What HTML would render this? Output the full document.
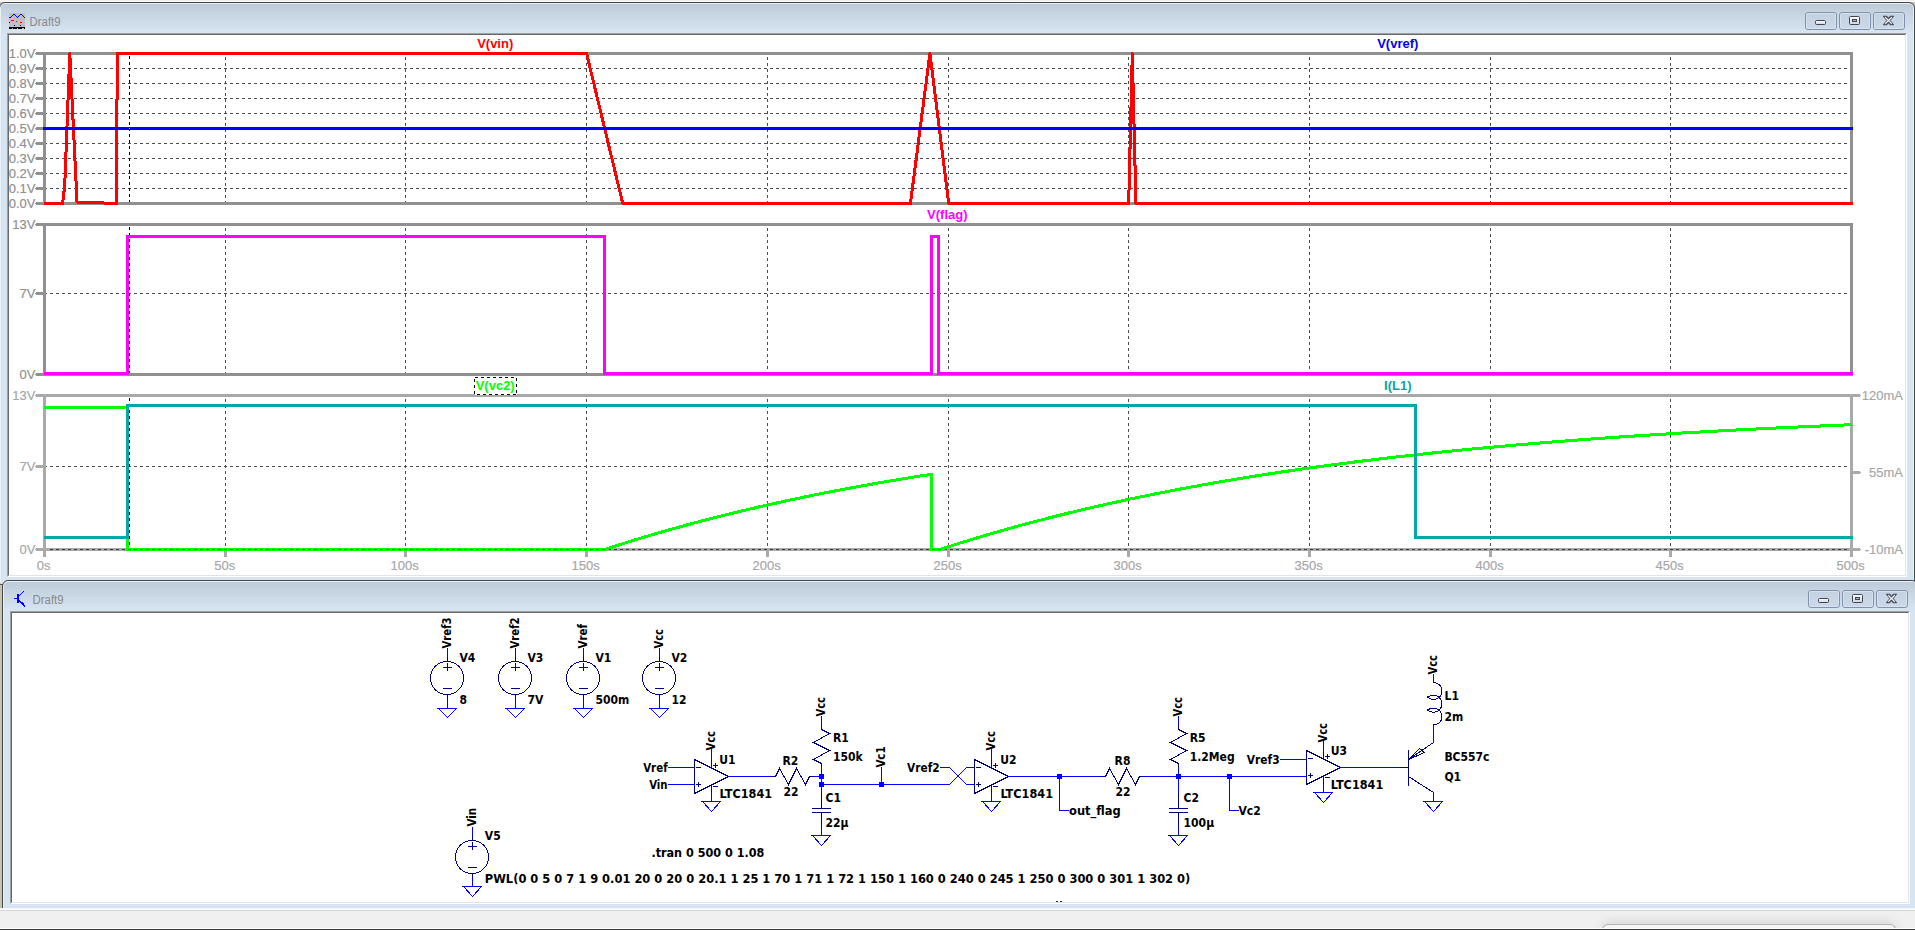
<!DOCTYPE html>
<html lang="en"><head><meta charset="utf-8"><title>LTspice - Draft9</title>
<style>
html,body{margin:0;padding:0}
body{width:1915px;height:930px;overflow:hidden;background:#f0f0f0;position:relative;font-family:"Liberation Sans",sans-serif}
#t1{position:absolute;left:0;top:1px;width:1915px;height:1px;background:#fafafa}
#mdi{position:absolute;left:0;top:2px;width:1915px;height:906px;background:#c7c3b1;overflow:hidden}
.win{position:absolute;box-sizing:border-box;border:1px solid #474747;border-radius:6px 6px 2px 2px;background:#d7e4f2 linear-gradient(#bccbdb 0,#bfcddb 2px,#d7e4f2 30px) no-repeat;background-size:100% 31px;box-shadow:inset 0 0 0 1px #e9f0fa}
.cl{position:absolute;left:7px;top:30px;width:1900px;box-sizing:border-box;border:1px solid;border-color:#a0a0a0 #fff #fff #a0a0a0;background:#fff}
.cl i{display:block;box-sizing:border-box;width:100%;height:100%;border:1px solid;border-color:#696969 #e3e3e3 #e3e3e3 #696969}
#sb{position:absolute;left:0;top:908px;width:1915px;height:22px;overflow:hidden;background:#f0f0f0;box-sizing:border-box;border-top:1px solid #f6f6f6;border-bottom:1px solid #3c3c3c}
#sb:before{content:"";position:absolute;left:0;top:0;width:100%;height:1px;background:#fff}
#sb:after{content:"";position:absolute;left:0;top:1px;width:100%;height:1px;background:#d5d5d5}
#sb b{position:absolute;left:0;bottom:0;width:100%;height:1px;background:#fff;z-index:2}
#tab{position:absolute;left:1602px;top:15px;width:294px;height:6px;border-bottom:0;box-sizing:border-box;border:1px solid #b4b4b4;border-radius:8px 8px 0 0;background:#f5f5f5;box-shadow:0 0 12px rgba(0,0,0,.2)}
svg{position:absolute;left:0;top:0}
.ts{font-family:"DejaVu Sans Condensed","DejaVu Sans","Liberation Sans",sans-serif}
.ta,.tt{font-family:"Liberation Sans",sans-serif}
</style></head><body>
<div id="t1"></div>
<div id="mdi">
 <div class="win" style="left:-1px;top:0;width:1916px;height:583px"><div class="cl" style="height:544px"><i></i></div></div>
 <div class="win" style="left:2px;top:578px;width:1916px;height:340px"><div class="cl" style="height:293px"><i></i></div></div>
</div>
<div id="sb"><div id="tab"></div><b></b></div>
<svg width="1915" height="930" viewBox="0 0 1915 930">
<g shape-rendering="crispEdges">
<line x1="44" y1="68.5" x2="1849" y2="68.5" stroke="#4d4d4d" stroke-width="1" stroke-dasharray="3 3"/>
<line x1="44" y1="83.5" x2="1849" y2="83.5" stroke="#4d4d4d" stroke-width="1" stroke-dasharray="3 3"/>
<line x1="44" y1="98.5" x2="1849" y2="98.5" stroke="#4d4d4d" stroke-width="1" stroke-dasharray="3 3"/>
<line x1="44" y1="113.5" x2="1849" y2="113.5" stroke="#4d4d4d" stroke-width="1" stroke-dasharray="3 3"/>
<line x1="44" y1="128.5" x2="1849" y2="128.5" stroke="#4d4d4d" stroke-width="1" stroke-dasharray="3 3"/>
<line x1="44" y1="143.5" x2="1849" y2="143.5" stroke="#4d4d4d" stroke-width="1" stroke-dasharray="3 3"/>
<line x1="44" y1="158.5" x2="1849" y2="158.5" stroke="#4d4d4d" stroke-width="1" stroke-dasharray="3 3"/>
<line x1="44" y1="173.5" x2="1849" y2="173.5" stroke="#4d4d4d" stroke-width="1" stroke-dasharray="3 3"/>
<line x1="44" y1="188.5" x2="1849" y2="188.5" stroke="#4d4d4d" stroke-width="1" stroke-dasharray="3 3"/>
<line x1="225.5" y1="57" x2="225.5" y2="202" stroke="#4d4d4d" stroke-width="1" stroke-dasharray="3 3"/>
<line x1="405.5" y1="57" x2="405.5" y2="202" stroke="#4d4d4d" stroke-width="1" stroke-dasharray="3 3"/>
<line x1="586.5" y1="57" x2="586.5" y2="202" stroke="#4d4d4d" stroke-width="1" stroke-dasharray="3 3"/>
<line x1="767.5" y1="57" x2="767.5" y2="202" stroke="#4d4d4d" stroke-width="1" stroke-dasharray="3 3"/>
<line x1="948.5" y1="57" x2="948.5" y2="202" stroke="#4d4d4d" stroke-width="1" stroke-dasharray="3 3"/>
<line x1="1128.5" y1="57" x2="1128.5" y2="202" stroke="#4d4d4d" stroke-width="1" stroke-dasharray="3 3"/>
<line x1="1309.5" y1="57" x2="1309.5" y2="202" stroke="#4d4d4d" stroke-width="1" stroke-dasharray="3 3"/>
<line x1="1490.5" y1="57" x2="1490.5" y2="202" stroke="#4d4d4d" stroke-width="1" stroke-dasharray="3 3"/>
<line x1="1670.5" y1="57" x2="1670.5" y2="202" stroke="#4d4d4d" stroke-width="1" stroke-dasharray="3 3"/>
<line x1="129.5" y1="56" x2="129.5" y2="202" stroke="#000" stroke-width="1" stroke-dasharray="3 3"/>
<line x1="44.5" y1="52" x2="44.5" y2="205" stroke="#909090" stroke-width="3"/>
<line x1="1851.5" y1="52" x2="1851.5" y2="205" stroke="#909090" stroke-width="3"/>
<line x1="36" y1="53.5" x2="1853" y2="53.5" stroke="#909090" stroke-width="3"/>
<line x1="36" y1="203.5" x2="1853" y2="203.5" stroke="#909090" stroke-width="3"/>
<line x1="36" y1="53.5" x2="44.5" y2="53.5" stroke="#909090" stroke-width="3"/>
<line x1="35" y1="53.5" x2="37" y2="53.5" stroke="#909090" stroke-width="1"/>
<line x1="36" y1="68.5" x2="44.5" y2="68.5" stroke="#909090" stroke-width="3"/>
<line x1="35" y1="68.5" x2="37" y2="68.5" stroke="#909090" stroke-width="1"/>
<line x1="36" y1="83.5" x2="44.5" y2="83.5" stroke="#909090" stroke-width="3"/>
<line x1="35" y1="83.5" x2="37" y2="83.5" stroke="#909090" stroke-width="1"/>
<line x1="36" y1="98.5" x2="44.5" y2="98.5" stroke="#909090" stroke-width="3"/>
<line x1="35" y1="98.5" x2="37" y2="98.5" stroke="#909090" stroke-width="1"/>
<line x1="36" y1="113.5" x2="44.5" y2="113.5" stroke="#909090" stroke-width="3"/>
<line x1="35" y1="113.5" x2="37" y2="113.5" stroke="#909090" stroke-width="1"/>
<line x1="36" y1="128.5" x2="44.5" y2="128.5" stroke="#909090" stroke-width="3"/>
<line x1="35" y1="128.5" x2="37" y2="128.5" stroke="#909090" stroke-width="1"/>
<line x1="36" y1="143.5" x2="44.5" y2="143.5" stroke="#909090" stroke-width="3"/>
<line x1="35" y1="143.5" x2="37" y2="143.5" stroke="#909090" stroke-width="1"/>
<line x1="36" y1="158.5" x2="44.5" y2="158.5" stroke="#909090" stroke-width="3"/>
<line x1="35" y1="158.5" x2="37" y2="158.5" stroke="#909090" stroke-width="1"/>
<line x1="36" y1="173.5" x2="44.5" y2="173.5" stroke="#909090" stroke-width="3"/>
<line x1="35" y1="173.5" x2="37" y2="173.5" stroke="#909090" stroke-width="1"/>
<line x1="36" y1="188.5" x2="44.5" y2="188.5" stroke="#909090" stroke-width="3"/>
<line x1="35" y1="188.5" x2="37" y2="188.5" stroke="#909090" stroke-width="1"/>
<line x1="36" y1="203.5" x2="44.5" y2="203.5" stroke="#909090" stroke-width="3"/>
<line x1="35" y1="203.5" x2="37" y2="203.5" stroke="#909090" stroke-width="1"/>
<line x1="44" y1="293.5" x2="1849" y2="293.5" stroke="#4d4d4d" stroke-width="1" stroke-dasharray="3 3"/>
<line x1="225.5" y1="228" x2="225.5" y2="373" stroke="#4d4d4d" stroke-width="1" stroke-dasharray="3 3"/>
<line x1="405.5" y1="228" x2="405.5" y2="373" stroke="#4d4d4d" stroke-width="1" stroke-dasharray="3 3"/>
<line x1="586.5" y1="228" x2="586.5" y2="373" stroke="#4d4d4d" stroke-width="1" stroke-dasharray="3 3"/>
<line x1="767.5" y1="228" x2="767.5" y2="373" stroke="#4d4d4d" stroke-width="1" stroke-dasharray="3 3"/>
<line x1="948.5" y1="228" x2="948.5" y2="373" stroke="#4d4d4d" stroke-width="1" stroke-dasharray="3 3"/>
<line x1="1128.5" y1="228" x2="1128.5" y2="373" stroke="#4d4d4d" stroke-width="1" stroke-dasharray="3 3"/>
<line x1="1309.5" y1="228" x2="1309.5" y2="373" stroke="#4d4d4d" stroke-width="1" stroke-dasharray="3 3"/>
<line x1="1490.5" y1="228" x2="1490.5" y2="373" stroke="#4d4d4d" stroke-width="1" stroke-dasharray="3 3"/>
<line x1="1670.5" y1="228" x2="1670.5" y2="373" stroke="#4d4d4d" stroke-width="1" stroke-dasharray="3 3"/>
<line x1="129.5" y1="227" x2="129.5" y2="373" stroke="#000" stroke-width="1" stroke-dasharray="3 3"/>
<line x1="44.5" y1="223" x2="44.5" y2="376" stroke="#909090" stroke-width="3"/>
<line x1="1851.5" y1="223" x2="1851.5" y2="376" stroke="#909090" stroke-width="3"/>
<line x1="36" y1="224.5" x2="1853" y2="224.5" stroke="#909090" stroke-width="3"/>
<line x1="36" y1="374.5" x2="1853" y2="374.5" stroke="#909090" stroke-width="3"/>
<line x1="36" y1="224.5" x2="44.5" y2="224.5" stroke="#909090" stroke-width="3"/>
<line x1="35" y1="224.5" x2="37" y2="224.5" stroke="#909090" stroke-width="1"/>
<line x1="36" y1="293.5" x2="44.5" y2="293.5" stroke="#909090" stroke-width="3"/>
<line x1="35" y1="293.5" x2="37" y2="293.5" stroke="#909090" stroke-width="1"/>
<line x1="36" y1="374.5" x2="44.5" y2="374.5" stroke="#909090" stroke-width="3"/>
<line x1="35" y1="374.5" x2="37" y2="374.5" stroke="#909090" stroke-width="1"/>
<line x1="44" y1="466.5" x2="1849" y2="466.5" stroke="#4d4d4d" stroke-width="1" stroke-dasharray="3 3"/>
<line x1="225.5" y1="399" x2="225.5" y2="548" stroke="#4d4d4d" stroke-width="1" stroke-dasharray="3 3"/>
<line x1="405.5" y1="399" x2="405.5" y2="548" stroke="#4d4d4d" stroke-width="1" stroke-dasharray="3 3"/>
<line x1="586.5" y1="399" x2="586.5" y2="548" stroke="#4d4d4d" stroke-width="1" stroke-dasharray="3 3"/>
<line x1="767.5" y1="399" x2="767.5" y2="548" stroke="#4d4d4d" stroke-width="1" stroke-dasharray="3 3"/>
<line x1="948.5" y1="399" x2="948.5" y2="548" stroke="#4d4d4d" stroke-width="1" stroke-dasharray="3 3"/>
<line x1="1128.5" y1="399" x2="1128.5" y2="548" stroke="#4d4d4d" stroke-width="1" stroke-dasharray="3 3"/>
<line x1="1309.5" y1="399" x2="1309.5" y2="548" stroke="#4d4d4d" stroke-width="1" stroke-dasharray="3 3"/>
<line x1="1490.5" y1="399" x2="1490.5" y2="548" stroke="#4d4d4d" stroke-width="1" stroke-dasharray="3 3"/>
<line x1="1670.5" y1="399" x2="1670.5" y2="548" stroke="#4d4d4d" stroke-width="1" stroke-dasharray="3 3"/>
<line x1="129.5" y1="398" x2="129.5" y2="548" stroke="#000" stroke-width="1" stroke-dasharray="3 3"/>
<line x1="44.5" y1="394" x2="44.5" y2="556.5" stroke="#a9a9a9" stroke-width="3"/>
<line x1="1851.5" y1="394" x2="1851.5" y2="556.5" stroke="#a9a9a9" stroke-width="3"/>
<line x1="36" y1="395.5" x2="1860" y2="395.5" stroke="#a9a9a9" stroke-width="3"/>
<line x1="36" y1="549.5" x2="1860" y2="549.5" stroke="#a9a9a9" stroke-width="3"/>
<line x1="36" y1="395.5" x2="44.5" y2="395.5" stroke="#a9a9a9" stroke-width="3"/>
<line x1="35" y1="395.5" x2="37" y2="395.5" stroke="#a9a9a9" stroke-width="1"/>
<line x1="36" y1="466.5" x2="44.5" y2="466.5" stroke="#a9a9a9" stroke-width="3"/>
<line x1="35" y1="466.5" x2="37" y2="466.5" stroke="#a9a9a9" stroke-width="1"/>
<line x1="36" y1="549.5" x2="44.5" y2="549.5" stroke="#a9a9a9" stroke-width="3"/>
<line x1="35" y1="549.5" x2="37" y2="549.5" stroke="#a9a9a9" stroke-width="1"/>
<line x1="1851.5" y1="395.5" x2="1860" y2="395.5" stroke="#a9a9a9" stroke-width="3"/>
<line x1="1859" y1="395.5" x2="1861" y2="395.5" stroke="#a9a9a9" stroke-width="1"/>
<line x1="1851.5" y1="472.5" x2="1860" y2="472.5" stroke="#a9a9a9" stroke-width="3"/>
<line x1="1859" y1="472.5" x2="1861" y2="472.5" stroke="#a9a9a9" stroke-width="1"/>
<line x1="1851.5" y1="549.5" x2="1860" y2="549.5" stroke="#a9a9a9" stroke-width="3"/>
<line x1="1859" y1="549.5" x2="1861" y2="549.5" stroke="#a9a9a9" stroke-width="1"/>
<line x1="50" y1="549.5" x2="1849" y2="549.5" stroke="#3a3a3a" stroke-width="1" stroke-dasharray="3 3"/>
<line x1="225.5" y1="551" x2="225.5" y2="557" stroke="#a9a9a9" stroke-width="3"/>
<line x1="405.5" y1="551" x2="405.5" y2="557" stroke="#a9a9a9" stroke-width="3"/>
<line x1="586.5" y1="551" x2="586.5" y2="557" stroke="#a9a9a9" stroke-width="3"/>
<line x1="767.5" y1="551" x2="767.5" y2="557" stroke="#a9a9a9" stroke-width="3"/>
<line x1="948.5" y1="551" x2="948.5" y2="557" stroke="#a9a9a9" stroke-width="3"/>
<line x1="1128.5" y1="551" x2="1128.5" y2="557" stroke="#a9a9a9" stroke-width="3"/>
<line x1="1309.5" y1="551" x2="1309.5" y2="557" stroke="#a9a9a9" stroke-width="3"/>
<line x1="1490.5" y1="551" x2="1490.5" y2="557" stroke="#a9a9a9" stroke-width="3"/>
<line x1="1670.5" y1="551" x2="1670.5" y2="557" stroke="#a9a9a9" stroke-width="3"/>
<polyline points="43.5,203.5 44.5,203.5 62.57,203.5 64.74,185.5 69.8,53.5 77.03,202 116.78,203.5 117.14,53.5 586.6,53.5 622.74,203.5 910.41,203.5 929.93,53.5 948.72,203.5 1128.7,203.5 1132.31,53.5 1135.93,203.5 1851.5,203.5 1852.5,203.5" fill="none" stroke="#ff0000" stroke-width="3" stroke-linejoin="round"/>
<line x1="43" y1="128.5" x2="1853" y2="128.5" stroke="#0000ff" stroke-width="3"/>
<rect x="129" y="128" width="1" height="1" fill="#e8e800"/>
<polyline points="43.5,373.5 127.5,373.5 127.5,236.5 604.5,236.5 604.5,373.5 931.5,373.5 931.5,236.5 938.5,236.5 938.5,373.5 1852.5,373.5" fill="none" stroke="#ff00ff" stroke-width="3" stroke-linejoin="round"/>
<polyline points="43.5,407.5 127.5,407.5 127.5,549.5 604.5,549.5 606,549.06 610,547.76 614,546.47 618,545.2 622,543.93 626,542.68 630,541.44 634,540.2 638,538.98 642,537.78 646,536.58 650,535.39 654,534.22 658,533.05 662,531.9 666,530.75 670,529.62 674,528.5 678,527.39 682,526.28 686,525.19 690,524.11 694,523.04 698,521.98 702,520.92 706,519.88 710,518.85 714,517.82 718,516.81 722,515.8 726,514.81 730,513.82 734,512.84 738,511.88 742,510.92 746,509.97 750,509.02 754,508.09 758,507.16 762,506.25 766,505.34 770,504.44 774,503.55 778,502.67 782,501.79 786,500.92 790,500.06 794,499.21 798,498.37 802,497.53 806,496.71 810,495.89 814,495.07 818,494.27 822,493.47 826,492.68 830,491.9 834,491.12 838,490.35 842,489.59 846,488.83 850,488.08 854,487.34 858,486.61 862,485.88 866,485.16 870,484.45 874,483.74 878,483.04 882,482.34 886,481.65 890,480.97 894,480.3 898,479.63 902,478.96 906,478.3 910,477.65 914,477.01 918,476.37 922,475.73 926,475.11 930,474.48 931.5,474.25 931.5,549.5 940,549.5 942,548.85 946,547.55 950,546.26 954,544.98 958,543.72 962,542.47 966,541.23 970,540 974,538.78 978,537.57 982,536.38 986,535.19 990,534.02 994,532.86 998,531.7 1002,530.56 1006,529.43 1010,528.31 1014,527.2 1018,526.1 1022,525.01 1026,523.93 1030,522.86 1034,521.8 1038,520.75 1042,519.71 1046,518.68 1050,517.65 1054,516.64 1058,515.64 1062,514.64 1066,513.66 1070,512.68 1074,511.71 1078,510.76 1082,509.81 1086,508.87 1090,507.93 1094,507.01 1098,506.1 1102,505.19 1106,504.29 1110,503.4 1114,502.52 1118,501.65 1122,500.78 1126,499.92 1130,499.07 1134,498.23 1138,497.39 1142,496.57 1146,495.75 1150,494.94 1154,494.13 1158,493.34 1162,492.55 1166,491.76 1170,490.99 1174,490.22 1178,489.46 1182,488.71 1186,487.96 1190,487.22 1194,486.49 1198,485.76 1202,485.04 1206,484.33 1210,483.62 1214,482.92 1218,482.23 1222,481.54 1226,480.86 1230,480.18 1234,479.51 1238,478.85 1242,478.19 1246,477.54 1250,476.9 1254,476.26 1258,475.63 1262,475 1266,474.38 1270,473.76 1274,473.16 1278,472.55 1282,471.95 1286,471.36 1290,470.77 1294,470.19 1298,469.61 1302,469.04 1306,468.47 1310,467.91 1314,467.36 1318,466.81 1322,466.26 1326,465.72 1330,465.18 1334,464.65 1338,464.13 1342,463.6 1346,463.09 1350,462.58 1354,462.07 1358,461.57 1362,461.07 1366,460.58 1370,460.09 1374,459.6 1378,459.12 1382,458.65 1386,458.18 1390,457.71 1394,457.25 1398,456.79 1402,456.34 1406,455.89 1410,455.44 1414,455 1418,454.56 1422,454.13 1426,453.7 1430,453.27 1434,452.85 1438,452.43 1442,452.02 1446,451.61 1450,451.2 1454,450.8 1458,450.4 1462,450.01 1466,449.61 1470,449.23 1474,448.84 1478,448.46 1482,448.08 1486,447.71 1490,447.34 1494,446.97 1498,446.61 1502,446.25 1506,445.89 1510,445.54 1514,445.19 1518,444.84 1522,444.49 1526,444.15 1530,443.82 1534,443.48 1538,443.15 1542,442.82 1546,442.49 1550,442.17 1554,441.85 1558,441.53 1562,441.22 1566,440.91 1570,440.6 1574,440.3 1578,439.99 1582,439.69 1586,439.4 1590,439.1 1594,438.81 1598,438.52 1602,438.24 1606,437.95 1610,437.67 1614,437.39 1618,437.12 1622,436.84 1626,436.57 1630,436.3 1634,436.04 1638,435.78 1642,435.51 1646,435.26 1650,435 1654,434.75 1658,434.49 1662,434.25 1666,434 1670,433.75 1674,433.51 1678,433.27 1682,433.03 1686,432.8 1690,432.56 1694,432.33 1698,432.1 1702,431.88 1706,431.65 1710,431.43 1714,431.21 1718,430.99 1722,430.77 1726,430.55 1730,430.34 1734,430.13 1738,429.92 1742,429.71 1746,429.51 1750,429.31 1754,429.1 1758,428.9 1762,428.71 1766,428.51 1770,428.32 1774,428.12 1778,427.93 1782,427.74 1786,427.56 1790,427.37 1794,427.19 1798,427 1802,426.82 1806,426.65 1810,426.47 1814,426.29 1818,426.12 1822,425.95 1826,425.78 1830,425.61 1834,425.44 1838,425.27 1842,425.11 1846,424.94 1850,424.78 1852.5,424.72" fill="none" stroke="#00ff00" stroke-width="3" stroke-linejoin="round"/>
<line x1="128" y1="549.5" x2="606" y2="549.5" stroke="#ff00ff" stroke-width="1" stroke-dasharray="3 3"/>
<line x1="932" y1="549.5" x2="944" y2="549.5" stroke="#ff00ff" stroke-width="1" stroke-dasharray="3 3"/>
<polyline points="43.5,537.5 127.5,537.5 127.5,405.5 1415.5,405.5 1415.5,537.5 1852.5,537.5" fill="none" stroke="#00a8a8" stroke-width="3" stroke-linejoin="round"/>
<line x1="129.5" y1="398" x2="129.5" y2="548" stroke="#000" stroke-width="1" stroke-dasharray="3 3"/>
<rect x="129" y="404" width="1" height="3" fill="#f04040"/>
<rect x="474.5" y="377.5" width="42" height="17" fill="#fff" stroke="none"/>
<rect x="474.5" y="377.5" width="42" height="17" fill="none" stroke="#000" stroke-width="1" stroke-dasharray="3 3"/>
</g>
<text class="ta" x="35.5" y="58" font-size="13.7" font-weight="normal" fill="#8f8f8f" text-anchor="end" stroke="#8f8f8f" stroke-width=".18" textLength="26.74" lengthAdjust="spacingAndGlyphs">1.0V</text>
<text class="ta" x="35.5" y="73" font-size="13.7" font-weight="normal" fill="#8f8f8f" text-anchor="end" stroke="#8f8f8f" stroke-width=".18" textLength="26.74" lengthAdjust="spacingAndGlyphs">0.9V</text>
<text class="ta" x="35.5" y="88" font-size="13.7" font-weight="normal" fill="#8f8f8f" text-anchor="end" stroke="#8f8f8f" stroke-width=".18" textLength="26.74" lengthAdjust="spacingAndGlyphs">0.8V</text>
<text class="ta" x="35.5" y="103" font-size="13.7" font-weight="normal" fill="#8f8f8f" text-anchor="end" stroke="#8f8f8f" stroke-width=".18" textLength="26.74" lengthAdjust="spacingAndGlyphs">0.7V</text>
<text class="ta" x="35.5" y="118" font-size="13.7" font-weight="normal" fill="#8f8f8f" text-anchor="end" stroke="#8f8f8f" stroke-width=".18" textLength="26.74" lengthAdjust="spacingAndGlyphs">0.6V</text>
<text class="ta" x="35.5" y="133" font-size="13.7" font-weight="normal" fill="#8f8f8f" text-anchor="end" stroke="#8f8f8f" stroke-width=".18" textLength="26.74" lengthAdjust="spacingAndGlyphs">0.5V</text>
<text class="ta" x="35.5" y="148" font-size="13.7" font-weight="normal" fill="#8f8f8f" text-anchor="end" stroke="#8f8f8f" stroke-width=".18" textLength="26.74" lengthAdjust="spacingAndGlyphs">0.4V</text>
<text class="ta" x="35.5" y="163" font-size="13.7" font-weight="normal" fill="#8f8f8f" text-anchor="end" stroke="#8f8f8f" stroke-width=".18" textLength="26.74" lengthAdjust="spacingAndGlyphs">0.3V</text>
<text class="ta" x="35.5" y="178" font-size="13.7" font-weight="normal" fill="#8f8f8f" text-anchor="end" stroke="#8f8f8f" stroke-width=".18" textLength="26.74" lengthAdjust="spacingAndGlyphs">0.2V</text>
<text class="ta" x="35.5" y="193" font-size="13.7" font-weight="normal" fill="#8f8f8f" text-anchor="end" stroke="#8f8f8f" stroke-width=".18" textLength="26.74" lengthAdjust="spacingAndGlyphs">0.1V</text>
<text class="ta" x="35.5" y="208" font-size="13.7" font-weight="normal" fill="#8f8f8f" text-anchor="end" stroke="#8f8f8f" stroke-width=".18" textLength="26.74" lengthAdjust="spacingAndGlyphs">0.0V</text>
<text class="ta" x="35.5" y="229" font-size="13.7" font-weight="normal" fill="#8f8f8f" text-anchor="end" stroke="#8f8f8f" stroke-width=".18" textLength="23.13" lengthAdjust="spacingAndGlyphs">13V</text>
<text class="ta" x="35.5" y="298" font-size="13.7" font-weight="normal" fill="#8f8f8f" text-anchor="end" stroke="#8f8f8f" stroke-width=".18" textLength="15.9" lengthAdjust="spacingAndGlyphs">7V</text>
<text class="ta" x="35.5" y="379" font-size="13.7" font-weight="normal" fill="#8f8f8f" text-anchor="end" stroke="#8f8f8f" stroke-width=".18" textLength="15.9" lengthAdjust="spacingAndGlyphs">0V</text>
<text class="ta" x="35.5" y="400" font-size="13.7" font-weight="normal" fill="#a6a6a6" text-anchor="end" stroke="#a6a6a6" stroke-width=".18" textLength="23.13" lengthAdjust="spacingAndGlyphs">13V</text>
<text class="ta" x="35.5" y="471" font-size="13.7" font-weight="normal" fill="#a6a6a6" text-anchor="end" stroke="#a6a6a6" stroke-width=".18" textLength="15.9" lengthAdjust="spacingAndGlyphs">7V</text>
<text class="ta" x="35.5" y="554" font-size="13.7" font-weight="normal" fill="#a6a6a6" text-anchor="end" stroke="#a6a6a6" stroke-width=".18" textLength="15.9" lengthAdjust="spacingAndGlyphs">0V</text>
<text class="ta" x="1903" y="400" font-size="13.7" font-weight="normal" fill="#a6a6a6" text-anchor="end" stroke="#a6a6a6" stroke-width=".18" textLength="41.19" lengthAdjust="spacingAndGlyphs">120mA</text>
<text class="ta" x="1903" y="477" font-size="13.7" font-weight="normal" fill="#a6a6a6" text-anchor="end" stroke="#a6a6a6" stroke-width=".18" textLength="33.96" lengthAdjust="spacingAndGlyphs">55mA</text>
<text class="ta" x="1903" y="554" font-size="13.7" font-weight="normal" fill="#a6a6a6" text-anchor="end" stroke="#a6a6a6" stroke-width=".18" textLength="38.29" lengthAdjust="spacingAndGlyphs">-10mA</text>
<text class="ta" x="43.7" y="570" font-size="13.7" font-weight="normal" fill="#a6a6a6" text-anchor="middle" stroke="#a6a6a6" stroke-width=".18" textLength="13.73" lengthAdjust="spacingAndGlyphs">0s</text>
<text class="ta" x="224.7" y="570" font-size="13.7" font-weight="normal" fill="#a6a6a6" text-anchor="middle" stroke="#a6a6a6" stroke-width=".18" textLength="20.96" lengthAdjust="spacingAndGlyphs">50s</text>
<text class="ta" x="404.7" y="570" font-size="13.7" font-weight="normal" fill="#a6a6a6" text-anchor="middle" stroke="#a6a6a6" stroke-width=".18" textLength="28.19" lengthAdjust="spacingAndGlyphs">100s</text>
<text class="ta" x="585.7" y="570" font-size="13.7" font-weight="normal" fill="#a6a6a6" text-anchor="middle" stroke="#a6a6a6" stroke-width=".18" textLength="28.19" lengthAdjust="spacingAndGlyphs">150s</text>
<text class="ta" x="766.7" y="570" font-size="13.7" font-weight="normal" fill="#a6a6a6" text-anchor="middle" stroke="#a6a6a6" stroke-width=".18" textLength="28.19" lengthAdjust="spacingAndGlyphs">200s</text>
<text class="ta" x="947.7" y="570" font-size="13.7" font-weight="normal" fill="#a6a6a6" text-anchor="middle" stroke="#a6a6a6" stroke-width=".18" textLength="28.19" lengthAdjust="spacingAndGlyphs">250s</text>
<text class="ta" x="1127.7" y="570" font-size="13.7" font-weight="normal" fill="#a6a6a6" text-anchor="middle" stroke="#a6a6a6" stroke-width=".18" textLength="28.19" lengthAdjust="spacingAndGlyphs">300s</text>
<text class="ta" x="1308.7" y="570" font-size="13.7" font-weight="normal" fill="#a6a6a6" text-anchor="middle" stroke="#a6a6a6" stroke-width=".18" textLength="28.19" lengthAdjust="spacingAndGlyphs">350s</text>
<text class="ta" x="1489.7" y="570" font-size="13.7" font-weight="normal" fill="#a6a6a6" text-anchor="middle" stroke="#a6a6a6" stroke-width=".18" textLength="28.19" lengthAdjust="spacingAndGlyphs">400s</text>
<text class="ta" x="1669.7" y="570" font-size="13.7" font-weight="normal" fill="#a6a6a6" text-anchor="middle" stroke="#a6a6a6" stroke-width=".18" textLength="28.19" lengthAdjust="spacingAndGlyphs">450s</text>
<text class="ta" x="1850.7" y="570" font-size="13.7" font-weight="normal" fill="#a6a6a6" text-anchor="middle" stroke="#a6a6a6" stroke-width=".18" textLength="28.19" lengthAdjust="spacingAndGlyphs">500s</text>
<text class="ta" x="495.2" y="48" font-size="13.7" font-weight="bold" fill="#ff0000" text-anchor="middle" textLength="36.11" lengthAdjust="spacingAndGlyphs">V(vin)</text>
<text class="ta" x="1397.8" y="48" font-size="13.7" font-weight="bold" fill="#0000ff" text-anchor="middle" textLength="41.18" lengthAdjust="spacingAndGlyphs">V(vref)</text>
<text class="ta" x="947.3" y="219" font-size="13.7" font-weight="bold" fill="#ff00ff" text-anchor="middle" textLength="40.44" lengthAdjust="spacingAndGlyphs">V(flag)</text>
<text class="ta" x="495.2" y="390" font-size="13.7" font-weight="bold" fill="#00ff00" text-anchor="middle" textLength="39.02" lengthAdjust="spacingAndGlyphs">V(vc2)</text>
<text class="ta" x="1397.8" y="390" font-size="13.7" font-weight="bold" fill="#00a8a8" text-anchor="middle" textLength="27.44" lengthAdjust="spacingAndGlyphs">I(L1)</text>
<g shape-rendering="crispEdges" fill="none" stroke-linecap="square">
<polyline points="447.5,648.5 447.5,656.5" fill="none" stroke="#0000ff" stroke-width="1"/>
<polyline points="447.5,657.5 447.5,661.5" fill="none" stroke="#000080" stroke-width="1"/>
<polyline points="463.5,678 463.44,679.44 463.25,680.87 462.94,682.27 462.5,683.64 461.95,684.97 461.29,686.25 460.52,687.46 459.64,688.61 458.67,689.67 457.61,690.64 456.46,691.52 455.25,692.29 453.97,692.95 452.64,693.5 451.27,693.94 449.87,694.25 448.44,694.44 447,694.5 445.56,694.44 444.13,694.25 442.73,693.94 441.36,693.5 440.03,692.95 438.75,692.29 437.54,691.52 436.39,690.64 435.33,689.67 434.36,688.61 433.48,687.46 432.71,686.25 432.05,684.97 431.5,683.64 431.06,682.27 430.75,680.87 430.56,679.44 430.5,678 430.56,676.56 430.75,675.13 431.06,673.73 431.5,672.36 432.05,671.03 432.71,669.75 433.48,668.54 434.36,667.39 435.33,666.33 436.39,665.36 437.54,664.48 438.75,663.71 440.03,663.05 441.36,662.5 442.73,662.06 444.13,661.75 445.56,661.56 447,661.5 448.44,661.56 449.87,661.75 451.27,662.06 452.64,662.5 453.97,663.05 455.25,663.71 456.46,664.48 457.61,665.36 458.67,666.33 459.64,667.39 460.52,668.54 461.29,669.75 461.95,671.03 462.5,672.36 462.94,673.73 463.25,675.13 463.44,676.56 463.5,678" fill="none" stroke="#000080" stroke-width="1"/>
<polyline points="443.5,667.5 451.5,667.5" fill="none" stroke="#000080" stroke-width="1"/>
<polyline points="447.5,663.5 447.5,670.5" fill="none" stroke="#000080" stroke-width="1"/>
<polyline points="443.5,688.5 451.5,688.5" fill="none" stroke="#000080" stroke-width="1"/>
<polyline points="447.5,694.5 447.5,698.5" fill="none" stroke="#000080" stroke-width="1"/>
<polyline points="447.5,699.5 447.5,708.5" fill="none" stroke="#0000ff" stroke-width="1"/>
<polyline points="438.5,708.5 456.5,708.5 447.5,717.5 438.5,708.5" fill="none" stroke="#0000ff" stroke-width="1"/>
<rect x="437" y="708" width="1" height="1" fill="#000030" stroke="none"/>
<polyline points="515.5,648.5 515.5,656.5" fill="none" stroke="#0000ff" stroke-width="1"/>
<polyline points="515.5,657.5 515.5,661.5" fill="none" stroke="#000080" stroke-width="1"/>
<polyline points="531.5,678 531.44,679.44 531.25,680.87 530.94,682.27 530.5,683.64 529.95,684.97 529.29,686.25 528.52,687.46 527.64,688.61 526.67,689.67 525.61,690.64 524.46,691.52 523.25,692.29 521.97,692.95 520.64,693.5 519.27,693.94 517.87,694.25 516.44,694.44 515,694.5 513.56,694.44 512.13,694.25 510.73,693.94 509.36,693.5 508.03,692.95 506.75,692.29 505.54,691.52 504.39,690.64 503.33,689.67 502.36,688.61 501.48,687.46 500.71,686.25 500.05,684.97 499.5,683.64 499.06,682.27 498.75,680.87 498.56,679.44 498.5,678 498.56,676.56 498.75,675.13 499.06,673.73 499.5,672.36 500.05,671.03 500.71,669.75 501.48,668.54 502.36,667.39 503.33,666.33 504.39,665.36 505.54,664.48 506.75,663.71 508.03,663.05 509.36,662.5 510.73,662.06 512.13,661.75 513.56,661.56 515,661.5 516.44,661.56 517.87,661.75 519.27,662.06 520.64,662.5 521.97,663.05 523.25,663.71 524.46,664.48 525.61,665.36 526.67,666.33 527.64,667.39 528.52,668.54 529.29,669.75 529.95,671.03 530.5,672.36 530.94,673.73 531.25,675.13 531.44,676.56 531.5,678" fill="none" stroke="#000080" stroke-width="1"/>
<polyline points="511.5,667.5 519.5,667.5" fill="none" stroke="#000080" stroke-width="1"/>
<polyline points="515.5,663.5 515.5,670.5" fill="none" stroke="#000080" stroke-width="1"/>
<polyline points="511.5,688.5 519.5,688.5" fill="none" stroke="#000080" stroke-width="1"/>
<polyline points="515.5,694.5 515.5,698.5" fill="none" stroke="#000080" stroke-width="1"/>
<polyline points="515.5,699.5 515.5,708.5" fill="none" stroke="#0000ff" stroke-width="1"/>
<polyline points="506.5,708.5 524.5,708.5 515.5,717.5 506.5,708.5" fill="none" stroke="#0000ff" stroke-width="1"/>
<rect x="505" y="708" width="1" height="1" fill="#000030" stroke="none"/>
<polyline points="583.5,648.5 583.5,656.5" fill="none" stroke="#0000ff" stroke-width="1"/>
<polyline points="583.5,657.5 583.5,661.5" fill="none" stroke="#000080" stroke-width="1"/>
<polyline points="599.5,678 599.44,679.44 599.25,680.87 598.94,682.27 598.5,683.64 597.95,684.97 597.29,686.25 596.52,687.46 595.64,688.61 594.67,689.67 593.61,690.64 592.46,691.52 591.25,692.29 589.97,692.95 588.64,693.5 587.27,693.94 585.87,694.25 584.44,694.44 583,694.5 581.56,694.44 580.13,694.25 578.73,693.94 577.36,693.5 576.03,692.95 574.75,692.29 573.54,691.52 572.39,690.64 571.33,689.67 570.36,688.61 569.48,687.46 568.71,686.25 568.05,684.97 567.5,683.64 567.06,682.27 566.75,680.87 566.56,679.44 566.5,678 566.56,676.56 566.75,675.13 567.06,673.73 567.5,672.36 568.05,671.03 568.71,669.75 569.48,668.54 570.36,667.39 571.33,666.33 572.39,665.36 573.54,664.48 574.75,663.71 576.03,663.05 577.36,662.5 578.73,662.06 580.13,661.75 581.56,661.56 583,661.5 584.44,661.56 585.87,661.75 587.27,662.06 588.64,662.5 589.97,663.05 591.25,663.71 592.46,664.48 593.61,665.36 594.67,666.33 595.64,667.39 596.52,668.54 597.29,669.75 597.95,671.03 598.5,672.36 598.94,673.73 599.25,675.13 599.44,676.56 599.5,678" fill="none" stroke="#000080" stroke-width="1"/>
<polyline points="579.5,667.5 587.5,667.5" fill="none" stroke="#000080" stroke-width="1"/>
<polyline points="583.5,663.5 583.5,670.5" fill="none" stroke="#000080" stroke-width="1"/>
<polyline points="579.5,688.5 587.5,688.5" fill="none" stroke="#000080" stroke-width="1"/>
<polyline points="583.5,694.5 583.5,698.5" fill="none" stroke="#000080" stroke-width="1"/>
<polyline points="583.5,699.5 583.5,708.5" fill="none" stroke="#0000ff" stroke-width="1"/>
<polyline points="574.5,708.5 592.5,708.5 583.5,717.5 574.5,708.5" fill="none" stroke="#0000ff" stroke-width="1"/>
<rect x="573" y="708" width="1" height="1" fill="#000030" stroke="none"/>
<polyline points="659.5,648.5 659.5,656.5" fill="none" stroke="#0000ff" stroke-width="1"/>
<polyline points="659.5,657.5 659.5,661.5" fill="none" stroke="#000080" stroke-width="1"/>
<polyline points="675.5,678 675.44,679.44 675.25,680.87 674.94,682.27 674.5,683.64 673.95,684.97 673.29,686.25 672.52,687.46 671.64,688.61 670.67,689.67 669.61,690.64 668.46,691.52 667.25,692.29 665.97,692.95 664.64,693.5 663.27,693.94 661.87,694.25 660.44,694.44 659,694.5 657.56,694.44 656.13,694.25 654.73,693.94 653.36,693.5 652.03,692.95 650.75,692.29 649.54,691.52 648.39,690.64 647.33,689.67 646.36,688.61 645.48,687.46 644.71,686.25 644.05,684.97 643.5,683.64 643.06,682.27 642.75,680.87 642.56,679.44 642.5,678 642.56,676.56 642.75,675.13 643.06,673.73 643.5,672.36 644.05,671.03 644.71,669.75 645.48,668.54 646.36,667.39 647.33,666.33 648.39,665.36 649.54,664.48 650.75,663.71 652.03,663.05 653.36,662.5 654.73,662.06 656.13,661.75 657.56,661.56 659,661.5 660.44,661.56 661.87,661.75 663.27,662.06 664.64,662.5 665.97,663.05 667.25,663.71 668.46,664.48 669.61,665.36 670.67,666.33 671.64,667.39 672.52,668.54 673.29,669.75 673.95,671.03 674.5,672.36 674.94,673.73 675.25,675.13 675.44,676.56 675.5,678" fill="none" stroke="#000080" stroke-width="1"/>
<polyline points="655.5,667.5 663.5,667.5" fill="none" stroke="#000080" stroke-width="1"/>
<polyline points="659.5,663.5 659.5,670.5" fill="none" stroke="#000080" stroke-width="1"/>
<polyline points="655.5,688.5 663.5,688.5" fill="none" stroke="#000080" stroke-width="1"/>
<polyline points="659.5,694.5 659.5,698.5" fill="none" stroke="#000080" stroke-width="1"/>
<polyline points="659.5,699.5 659.5,708.5" fill="none" stroke="#0000ff" stroke-width="1"/>
<polyline points="650.5,708.5 668.5,708.5 659.5,717.5 650.5,708.5" fill="none" stroke="#0000ff" stroke-width="1"/>
<rect x="649" y="708" width="1" height="1" fill="#000030" stroke="none"/>
<polyline points="472.5,827.5 472.5,835.5" fill="none" stroke="#0000ff" stroke-width="1"/>
<polyline points="472.5,836.5 472.5,840.5" fill="none" stroke="#000080" stroke-width="1"/>
<polyline points="488.5,857 488.44,858.44 488.25,859.87 487.94,861.27 487.5,862.64 486.95,863.97 486.29,865.25 485.52,866.46 484.64,867.61 483.67,868.67 482.61,869.64 481.46,870.52 480.25,871.29 478.97,871.95 477.64,872.5 476.27,872.94 474.87,873.25 473.44,873.44 472,873.5 470.56,873.44 469.13,873.25 467.73,872.94 466.36,872.5 465.03,871.95 463.75,871.29 462.54,870.52 461.39,869.64 460.33,868.67 459.36,867.61 458.48,866.46 457.71,865.25 457.05,863.97 456.5,862.64 456.06,861.27 455.75,859.87 455.56,858.44 455.5,857 455.56,855.56 455.75,854.13 456.06,852.73 456.5,851.36 457.05,850.03 457.71,848.75 458.48,847.54 459.36,846.39 460.33,845.33 461.39,844.36 462.54,843.48 463.75,842.71 465.03,842.05 466.36,841.5 467.73,841.06 469.13,840.75 470.56,840.56 472,840.5 473.44,840.56 474.87,840.75 476.27,841.06 477.64,841.5 478.97,842.05 480.25,842.71 481.46,843.48 482.61,844.36 483.67,845.33 484.64,846.39 485.52,847.54 486.29,848.75 486.95,850.03 487.5,851.36 487.94,852.73 488.25,854.13 488.44,855.56 488.5,857" fill="none" stroke="#000080" stroke-width="1"/>
<polyline points="468.5,846.5 476.5,846.5" fill="none" stroke="#000080" stroke-width="1"/>
<polyline points="472.5,842.5 472.5,849.5" fill="none" stroke="#000080" stroke-width="1"/>
<polyline points="468.5,867.5 476.5,867.5" fill="none" stroke="#000080" stroke-width="1"/>
<polyline points="472.5,873.5 472.5,877.5" fill="none" stroke="#000080" stroke-width="1"/>
<polyline points="472.5,878.5 472.5,886.5" fill="none" stroke="#0000ff" stroke-width="1"/>
<polyline points="463.5,886.5 481.5,886.5 472.5,896.5 463.5,886.5" fill="none" stroke="#0000ff" stroke-width="1"/>
<rect x="462" y="886" width="1" height="1" fill="#000030" stroke="none"/>
<polyline points="694.5,759.5 728.5,776.5 694.5,793.5 694.5,759.5" fill="none" stroke="#000080" stroke-width="1"/>
<polyline points="696.5,767.5 700.5,767.5" fill="none" stroke="#000080" stroke-width="1"/>
<polyline points="696.5,784.5 700.5,784.5" fill="none" stroke="#000080" stroke-width="1"/>
<polyline points="698.5,782.5 698.5,786.5" fill="none" stroke="#000080" stroke-width="1"/>
<polyline points="711.5,759.5 711.5,767.5" fill="none" stroke="#000080" stroke-width="1"/>
<polyline points="711.5,793.5 711.5,784.5" fill="none" stroke="#000080" stroke-width="1"/>
<polyline points="713.5,765.5 717.5,765.5" fill="none" stroke="#000080" stroke-width="1"/>
<polyline points="715.5,763.5 715.5,767.5" fill="none" stroke="#000080" stroke-width="1"/>
<polyline points="713.5,786.5 717.5,786.5" fill="none" stroke="#000080" stroke-width="1"/>
<polyline points="711.5,749.5 711.5,759.5" fill="none" stroke="#0000ff" stroke-width="1"/>
<polyline points="711.5,793.5 711.5,801.5" fill="none" stroke="#0000ff" stroke-width="1"/>
<polyline points="702.5,801.5 720.5,801.5 711.5,811.5 702.5,801.5" fill="none" stroke="#0000ff" stroke-width="1"/>
<rect x="701" y="801" width="1" height="1" fill="#000030" stroke="none"/>
<polyline points="668.5,767.5 694.5,767.5" fill="none" stroke="#0000ff" stroke-width="1"/>
<polyline points="668.5,784.5 694.5,784.5" fill="none" stroke="#0000ff" stroke-width="1"/>
<polyline points="728.5,776.5 771.5,776.5" fill="none" stroke="#0000ff" stroke-width="1"/>
<polyline points="771.5,776.5 775.5,776.5 779.5,768.5 788.5,784.5 796.5,768.5 805.5,784.5 809.5,776.5 813.5,776.5" fill="none" stroke="#000080" stroke-width="1"/>
<polyline points="813.5,776.5 821.5,776.5" fill="none" stroke="#0000ff" stroke-width="1"/>
<polyline points="821.5,716.5 821.5,725.5" fill="none" stroke="#0000ff" stroke-width="1"/>
<polyline points="821.5,725.5 821.5,729.5 829.5,733.5 813.5,742.5 829.5,750.5 813.5,759.5 821.5,763.5 821.5,767.5" fill="none" stroke="#000080" stroke-width="1"/>
<polyline points="821.5,767.5 821.5,793.5" fill="none" stroke="#0000ff" stroke-width="1"/>
<polyline points="821.5,793.5 821.5,808.5" fill="none" stroke="#000080" stroke-width="1"/>
<polyline points="812.5,808.5 830.5,808.5" fill="none" stroke="#000080" stroke-width="1"/>
<polyline points="812.5,812.5 830.5,812.5" fill="none" stroke="#000080" stroke-width="1"/>
<polyline points="821.5,812.5 821.5,827.5" fill="none" stroke="#000080" stroke-width="1"/>
<polyline points="821.5,827.5 821.5,835.5" fill="none" stroke="#0000ff" stroke-width="1"/>
<polyline points="812.5,835.5 830.5,835.5 821.5,845.5 812.5,835.5" fill="none" stroke="#0000ff" stroke-width="1"/>
<rect x="811" y="835" width="1" height="1" fill="#000030" stroke="none"/>
<polyline points="821.5,784.5 949.5,784.5 966.5,767.5 974.5,767.5" fill="none" stroke="#0000ff" stroke-width="1"/>
<polyline points="881.5,767.5 881.5,784.5" fill="none" stroke="#0000ff" stroke-width="1"/>
<polyline points="940.5,767.5 949.5,767.5 966.5,784.5 974.5,784.5" fill="none" stroke="#0000ff" stroke-width="1"/>
<polyline points="974.5,759.5 1008.5,776.5 974.5,793.5 974.5,759.5" fill="none" stroke="#000080" stroke-width="1"/>
<polyline points="976.5,767.5 980.5,767.5" fill="none" stroke="#000080" stroke-width="1"/>
<polyline points="976.5,784.5 980.5,784.5" fill="none" stroke="#000080" stroke-width="1"/>
<polyline points="978.5,782.5 978.5,786.5" fill="none" stroke="#000080" stroke-width="1"/>
<polyline points="991.5,759.5 991.5,767.5" fill="none" stroke="#000080" stroke-width="1"/>
<polyline points="991.5,793.5 991.5,784.5" fill="none" stroke="#000080" stroke-width="1"/>
<polyline points="993.5,765.5 997.5,765.5" fill="none" stroke="#000080" stroke-width="1"/>
<polyline points="995.5,763.5 995.5,767.5" fill="none" stroke="#000080" stroke-width="1"/>
<polyline points="993.5,786.5 997.5,786.5" fill="none" stroke="#000080" stroke-width="1"/>
<polyline points="991.5,749.5 991.5,759.5" fill="none" stroke="#0000ff" stroke-width="1"/>
<polyline points="991.5,793.5 991.5,801.5" fill="none" stroke="#0000ff" stroke-width="1"/>
<polyline points="982.5,801.5 1000.5,801.5 991.5,811.5 982.5,801.5" fill="none" stroke="#0000ff" stroke-width="1"/>
<rect x="981" y="801" width="1" height="1" fill="#000030" stroke="none"/>
<polyline points="1008.5,776.5 1101.5,776.5" fill="none" stroke="#0000ff" stroke-width="1"/>
<polyline points="1059.5,776.5 1059.5,810.5 1068.5,810.5" fill="none" stroke="#0000ff" stroke-width="1"/>
<polyline points="1101.5,776.5 1105.5,776.5 1109.5,768.5 1118.5,784.5 1126.5,768.5 1135.5,784.5 1139.5,776.5 1143.5,776.5" fill="none" stroke="#000080" stroke-width="1"/>
<polyline points="1143.5,776.5 1306.5,776.5" fill="none" stroke="#0000ff" stroke-width="1"/>
<polyline points="1178.5,716.5 1178.5,725.5" fill="none" stroke="#0000ff" stroke-width="1"/>
<polyline points="1178.5,725.5 1178.5,729.5 1186.5,733.5 1170.5,742.5 1186.5,750.5 1170.5,759.5 1178.5,763.5 1178.5,767.5" fill="none" stroke="#000080" stroke-width="1"/>
<polyline points="1178.5,767.5 1178.5,793.5" fill="none" stroke="#0000ff" stroke-width="1"/>
<polyline points="1178.5,793.5 1178.5,808.5" fill="none" stroke="#000080" stroke-width="1"/>
<polyline points="1169.5,808.5 1187.5,808.5" fill="none" stroke="#000080" stroke-width="1"/>
<polyline points="1169.5,812.5 1187.5,812.5" fill="none" stroke="#000080" stroke-width="1"/>
<polyline points="1178.5,812.5 1178.5,827.5" fill="none" stroke="#000080" stroke-width="1"/>
<polyline points="1178.5,827.5 1178.5,835.5" fill="none" stroke="#0000ff" stroke-width="1"/>
<polyline points="1169.5,835.5 1187.5,835.5 1178.5,845.5 1169.5,835.5" fill="none" stroke="#0000ff" stroke-width="1"/>
<rect x="1168" y="835" width="1" height="1" fill="#000030" stroke="none"/>
<polyline points="1229.5,776.5 1229.5,810.5 1238.5,810.5" fill="none" stroke="#0000ff" stroke-width="1"/>
<polyline points="1280.5,759.5 1306.5,759.5" fill="none" stroke="#0000ff" stroke-width="1"/>
<polyline points="1306.5,750.5 1340.5,767.5 1306.5,784.5 1306.5,750.5" fill="none" stroke="#000080" stroke-width="1"/>
<polyline points="1308.5,758.5 1312.5,758.5" fill="none" stroke="#000080" stroke-width="1"/>
<polyline points="1308.5,775.5 1312.5,775.5" fill="none" stroke="#000080" stroke-width="1"/>
<polyline points="1310.5,773.5 1310.5,777.5" fill="none" stroke="#000080" stroke-width="1"/>
<polyline points="1323.5,750.5 1323.5,758.5" fill="none" stroke="#000080" stroke-width="1"/>
<polyline points="1323.5,784.5 1323.5,775.5" fill="none" stroke="#000080" stroke-width="1"/>
<polyline points="1325.5,756.5 1329.5,756.5" fill="none" stroke="#000080" stroke-width="1"/>
<polyline points="1327.5,754.5 1327.5,758.5" fill="none" stroke="#000080" stroke-width="1"/>
<polyline points="1325.5,777.5 1329.5,777.5" fill="none" stroke="#000080" stroke-width="1"/>
<polyline points="1323.5,740.5 1323.5,750.5" fill="none" stroke="#0000ff" stroke-width="1"/>
<polyline points="1323.5,784.5 1323.5,792.5" fill="none" stroke="#0000ff" stroke-width="1"/>
<polyline points="1314.5,792.5 1332.5,792.5 1323.5,802.5 1314.5,792.5" fill="none" stroke="#0000ff" stroke-width="1"/>
<rect x="1313" y="792" width="1" height="1" fill="#000030" stroke="none"/>
<polyline points="1340.5,767.5 1400.5,767.5" fill="none" stroke="#0000ff" stroke-width="1"/>
<polyline points="1400.5,767.5 1408.5,767.5" fill="none" stroke="#000080" stroke-width="1"/>
<polyline points="1408.5,750.5 1408.5,785.5" fill="none" stroke="#000080" stroke-width="1"/>
<polyline points="1408.5,759.5 1433.5,742.5" fill="none" stroke="#000080" stroke-width="1"/>
<polyline points="1408.5,776.5 1433.5,792.5" fill="none" stroke="#000080" stroke-width="1"/>
<polyline points="1408.5,759.5 1419.5,748.5 1424.5,752.5 1408.5,759.5" fill="none" stroke="#000080" stroke-width="1"/>
<polyline points="1433.5,725.5 1433.5,742.5" fill="none" stroke="#0000ff" stroke-width="1"/>
<polyline points="1433.5,793.5 1433.5,801.5" fill="none" stroke="#0000ff" stroke-width="1"/>
<polyline points="1424.5,801.5 1442.5,801.5 1433.5,811.5 1424.5,801.5" fill="none" stroke="#0000ff" stroke-width="1"/>
<rect x="1423" y="801" width="1" height="1" fill="#000030" stroke="none"/>
<polyline points="1433.5,682.5 1435.85,682.83 1438.02,683.8 1439.83,685.33 1441.15,687.31 1441.88,689.57 1441.94,691.95 1441.35,694.25 1440.14,696.29 1438.42,697.93 1436.31,699.02 1433.98,699.48 1431.61,699.28 1429.39,698.43 1427.49,697" fill="none" stroke="#000080" stroke-width="1"/>
<polyline points="1427.49,697.73 1429.81,696.09 1432.55,695.3 1435.39,695.46 1438.02,696.55 1440.14,698.44 1441.52,700.93 1442,703.74 1441.52,706.55 1440.14,709.04 1438.02,710.93 1435.39,712.02 1432.55,712.18 1429.81,711.39 1427.49,709.75" fill="none" stroke="#000080" stroke-width="1"/>
<polyline points="1427.49,710.48 1429.39,709.05 1431.61,708.2 1433.98,708 1436.31,708.46 1438.42,709.55 1440.14,711.19 1441.35,713.23 1441.94,715.53 1441.88,717.91 1441.15,720.17 1439.83,722.15 1438.02,723.68 1435.85,724.65 1433.5,724.98" fill="none" stroke="#000080" stroke-width="1"/>
<polyline points="1433.5,674.5 1433.5,682.5" fill="none" stroke="#0000ff" stroke-width="1"/>
<rect x="819" y="774" width="5" height="5" fill="#0000ff" stroke="none"/>
<rect x="819" y="782" width="5" height="5" fill="#0000ff" stroke="none"/>
<rect x="879" y="782" width="5" height="5" fill="#0000ff" stroke="none"/>
<rect x="1057" y="774" width="5" height="5" fill="#0000ff" stroke="none"/>
<rect x="1176" y="774" width="5" height="5" fill="#0000ff" stroke="none"/>
<rect x="1227" y="774" width="5" height="5" fill="#0000ff" stroke="none"/>
</g>
<text class="ts" x="459.5" y="661.5" font-size="12" font-weight="bold" fill="#000" textLength="15.87" lengthAdjust="spacingAndGlyphs">V4</text>
<text class="ts" x="459.5" y="704" font-size="12" font-weight="bold" fill="#000">8</text>
<text class="ts" x="527.5" y="661.5" font-size="12" font-weight="bold" fill="#000" textLength="15.87" lengthAdjust="spacingAndGlyphs">V3</text>
<text class="ts" x="527.5" y="704" font-size="12" font-weight="bold" fill="#000" textLength="15.87" lengthAdjust="spacingAndGlyphs">7V</text>
<text class="ts" x="595.5" y="661.5" font-size="12" font-weight="bold" fill="#000" textLength="15.87" lengthAdjust="spacingAndGlyphs">V1</text>
<text class="ts" x="595.5" y="704" font-size="12" font-weight="bold" fill="#000" textLength="33.79" lengthAdjust="spacingAndGlyphs">500m</text>
<text class="ts" x="671.5" y="661.5" font-size="12" font-weight="bold" fill="#000" textLength="15.87" lengthAdjust="spacingAndGlyphs">V2</text>
<text class="ts" x="671.5" y="704" font-size="12" font-weight="bold" fill="#000" textLength="15.02" lengthAdjust="spacingAndGlyphs">12</text>
<text class="ts" transform="translate(451.3,648.6) rotate(-90)" font-size="12" font-weight="bold" fill="#000" textLength="31.2" lengthAdjust="spacingAndGlyphs">Vref3</text>
<text class="ts" transform="translate(519.3,648.6) rotate(-90)" font-size="12" font-weight="bold" fill="#000" textLength="31.2" lengthAdjust="spacingAndGlyphs">Vref2</text>
<text class="ts" transform="translate(587.3,648.6) rotate(-90)" font-size="12" font-weight="bold" fill="#000" textLength="24.6" lengthAdjust="spacingAndGlyphs">Vref</text>
<text class="ts" transform="translate(663.3,648.6) rotate(-90)" font-size="12" font-weight="bold" fill="#000" textLength="19.6" lengthAdjust="spacingAndGlyphs">Vcc</text>
<text class="ts" x="484.8" y="839.5" font-size="12" font-weight="bold" fill="#000" textLength="15.87" lengthAdjust="spacingAndGlyphs">V5</text>
<text class="ts" x="484.8" y="883" font-size="12" font-weight="bold" fill="#000" textLength="705.5" lengthAdjust="spacingAndGlyphs">PWL(0 0 5 0 7 1 9 0.01 20 0 20 0 20.1 1 25 1 70 1 71 1 72 1 150 1 160 0 240 0 245 1 250 0 300 0 301 1 302 0)</text>
<text class="ts" transform="translate(476.3,826.6) rotate(-90)" font-size="12" font-weight="bold" fill="#000" textLength="18.6" lengthAdjust="spacingAndGlyphs">Vin</text>
<text class="ts" x="651.4" y="857" font-size="12" font-weight="bold" fill="#000" textLength="113" lengthAdjust="spacingAndGlyphs">.tran 0 500 0 1.08</text>
<text class="ts" x="667.6" y="771.5" font-size="12" font-weight="bold" fill="#000" text-anchor="end" textLength="24.4" lengthAdjust="spacingAndGlyphs">Vref</text>
<text class="ts" x="667.6" y="788.5" font-size="12" font-weight="bold" fill="#000" text-anchor="end" textLength="18.4" lengthAdjust="spacingAndGlyphs">Vin</text>
<text class="ts" transform="translate(715.3,750.6) rotate(-90)" font-size="12" font-weight="bold" fill="#000" textLength="19.6" lengthAdjust="spacingAndGlyphs">Vcc</text>
<text class="ts" x="719.3" y="764" font-size="12" font-weight="bold" fill="#000" textLength="16.28" lengthAdjust="spacingAndGlyphs">U1</text>
<text class="ts" x="719.6" y="798" font-size="12" font-weight="bold" fill="#000" textLength="52.5" lengthAdjust="spacingAndGlyphs">LTC1841</text>
<text class="ts" x="782.5" y="764.5" font-size="12" font-weight="bold" fill="#000" textLength="15.83" lengthAdjust="spacingAndGlyphs">R2</text>
<text class="ts" x="783.5" y="796" font-size="12" font-weight="bold" fill="#000" textLength="15.02" lengthAdjust="spacingAndGlyphs">22</text>
<text class="ts" transform="translate(825.3,716.6) rotate(-90)" font-size="12" font-weight="bold" fill="#000" textLength="19.6" lengthAdjust="spacingAndGlyphs">Vcc</text>
<text class="ts" x="833" y="741.5" font-size="12" font-weight="bold" fill="#000" textLength="15.83" lengthAdjust="spacingAndGlyphs">R1</text>
<text class="ts" x="833" y="760.7" font-size="12" font-weight="bold" fill="#000" textLength="29.71" lengthAdjust="spacingAndGlyphs">150k</text>
<text class="ts" x="825.6" y="801.7" font-size="12" font-weight="bold" fill="#000" textLength="15.43" lengthAdjust="spacingAndGlyphs">C1</text>
<text class="ts" x="825.6" y="826.8" font-size="12" font-weight="bold" fill="#000" textLength="22.97" lengthAdjust="spacingAndGlyphs">22µ</text>
<text class="ts" transform="translate(885.3,767.6) rotate(-90)" font-size="12" font-weight="bold" fill="#000" textLength="21.2" lengthAdjust="spacingAndGlyphs">Vc1</text>
<text class="ts" x="939.7" y="771.7" font-size="12" font-weight="bold" fill="#000" text-anchor="end" textLength="32.6" lengthAdjust="spacingAndGlyphs">Vref2</text>
<text class="ts" transform="translate(995.3,750.6) rotate(-90)" font-size="12" font-weight="bold" fill="#000" textLength="19.6" lengthAdjust="spacingAndGlyphs">Vcc</text>
<text class="ts" x="1000.2" y="764" font-size="12" font-weight="bold" fill="#000" textLength="16.28" lengthAdjust="spacingAndGlyphs">U2</text>
<text class="ts" x="1000.5" y="798" font-size="12" font-weight="bold" fill="#000" textLength="52.5" lengthAdjust="spacingAndGlyphs">LTC1841</text>
<text class="ts" x="1069" y="815" font-size="12" font-weight="bold" fill="#000" textLength="51.8" lengthAdjust="spacingAndGlyphs">out_flag</text>
<text class="ts" x="1114.6" y="764.5" font-size="12" font-weight="bold" fill="#000" textLength="15.83" lengthAdjust="spacingAndGlyphs">R8</text>
<text class="ts" x="1115.5" y="796" font-size="12" font-weight="bold" fill="#000" textLength="15.02" lengthAdjust="spacingAndGlyphs">22</text>
<text class="ts" transform="translate(1182.3,716.6) rotate(-90)" font-size="12" font-weight="bold" fill="#000" textLength="19.6" lengthAdjust="spacingAndGlyphs">Vcc</text>
<text class="ts" x="1189.7" y="741.6" font-size="12" font-weight="bold" fill="#000" textLength="15.83" lengthAdjust="spacingAndGlyphs">R5</text>
<text class="ts" x="1189.7" y="760.7" font-size="12" font-weight="bold" fill="#000" textLength="44.93" lengthAdjust="spacingAndGlyphs">1.2Meg</text>
<text class="ts" x="1183.6" y="801.7" font-size="12" font-weight="bold" fill="#000" textLength="15.43" lengthAdjust="spacingAndGlyphs">C2</text>
<text class="ts" x="1183.6" y="826.8" font-size="12" font-weight="bold" fill="#000" textLength="30.48" lengthAdjust="spacingAndGlyphs">100µ</text>
<text class="ts" x="1238.4" y="814.7" font-size="12" font-weight="bold" fill="#000" textLength="22.27" lengthAdjust="spacingAndGlyphs">Vc2</text>
<text class="ts" x="1279.6" y="763.8" font-size="12" font-weight="bold" fill="#000" text-anchor="end" textLength="32.8" lengthAdjust="spacingAndGlyphs">Vref3</text>
<text class="ts" transform="translate(1327.3,742.6) rotate(-90)" font-size="12" font-weight="bold" fill="#000" textLength="19.6" lengthAdjust="spacingAndGlyphs">Vcc</text>
<text class="ts" x="1330.8" y="754.7" font-size="12" font-weight="bold" fill="#000" textLength="16.28" lengthAdjust="spacingAndGlyphs">U3</text>
<text class="ts" x="1330.8" y="789" font-size="12" font-weight="bold" fill="#000" textLength="52.5" lengthAdjust="spacingAndGlyphs">LTC1841</text>
<text class="ts" x="1444.4" y="761" font-size="12" font-weight="bold" fill="#000" textLength="45.08" lengthAdjust="spacingAndGlyphs">BC557c</text>
<text class="ts" x="1444.4" y="781" font-size="12" font-weight="bold" fill="#000" textLength="16.69" lengthAdjust="spacingAndGlyphs">Q1</text>
<text class="ts" x="1444.6" y="699.8" font-size="12" font-weight="bold" fill="#000" textLength="14.39" lengthAdjust="spacingAndGlyphs">L1</text>
<text class="ts" x="1444.6" y="720.5" font-size="12" font-weight="bold" fill="#000" textLength="18.76" lengthAdjust="spacingAndGlyphs">2m</text>
<text class="ts" transform="translate(1437.3,674.6) rotate(-90)" font-size="12" font-weight="bold" fill="#000" textLength="19.6" lengthAdjust="spacingAndGlyphs">Vcc</text>
<rect x="1056" y="901" width="2" height="1" fill="#222"/><rect x="1060" y="901" width="2" height="1" fill="#222"/>
<defs><linearGradient id="bg" x1="0" y1="0" x2="0" y2="1"><stop offset="0" stop-color="#c2d0df"/><stop offset="1" stop-color="#ccd9e8"/></linearGradient><linearGradient id="gl" x1="0" y1="0" x2="0" y2="1"><stop offset="0" stop-color="#ffffff"/><stop offset="1" stop-color="#d4d4d4"/></linearGradient></defs>
<rect x="1805.5" y="12.5" width="31" height="17" rx="2.5" fill="url(#bg)" stroke="#8290ad"/>
<rect x="1806.5" y="13.5" width="29" height="15" rx="1.5" fill="none" stroke="#dbe5f1" stroke-opacity=".75"/>
<rect x="1839.5" y="12.5" width="31" height="17" rx="2.5" fill="url(#bg)" stroke="#8290ad"/>
<rect x="1840.5" y="13.5" width="29" height="15" rx="1.5" fill="none" stroke="#dbe5f1" stroke-opacity=".75"/>
<rect x="1873.5" y="12.5" width="31" height="17" rx="2.5" fill="url(#bg)" stroke="#8290ad"/>
<rect x="1874.5" y="13.5" width="29" height="15" rx="1.5" fill="none" stroke="#dbe5f1" stroke-opacity=".75"/>
<rect x="1815.5" y="20.5" width="10" height="4" rx="1" fill="url(#gl)" stroke="#3e4557"/>
<rect x="1849.5" y="16.5" width="10" height="8" rx="1" fill="url(#gl)" stroke="#3e4557"/>
<rect x="1852.5" y="19.5" width="4" height="2" fill="#a9b9cf" stroke="#3e4557"/>
<g transform="translate(1883,16)"><path d="M0.3 0.2h3.6l1.6 2 1.6-2h3.6l-3.5 4.3 3.5 4.3h-3.6l-1.6-2-1.6 2h-3.6l3.5-4.3z" fill="#3e4557" stroke="#3e4557" stroke-width=".8" stroke-linejoin="round"/><path d="M2.2 1.3L8.8 7.7M8.8 1.3L2.2 7.7" fill="none" stroke="#f4f4f4" stroke-width="1.25"/></g>
<rect x="1808.5" y="590.5" width="31" height="17" rx="2.5" fill="url(#bg)" stroke="#8290ad"/>
<rect x="1809.5" y="591.5" width="29" height="15" rx="1.5" fill="none" stroke="#dbe5f1" stroke-opacity=".75"/>
<rect x="1842.5" y="590.5" width="31" height="17" rx="2.5" fill="url(#bg)" stroke="#8290ad"/>
<rect x="1843.5" y="591.5" width="29" height="15" rx="1.5" fill="none" stroke="#dbe5f1" stroke-opacity=".75"/>
<rect x="1876.5" y="590.5" width="31" height="17" rx="2.5" fill="url(#bg)" stroke="#8290ad"/>
<rect x="1877.5" y="591.5" width="29" height="15" rx="1.5" fill="none" stroke="#dbe5f1" stroke-opacity=".75"/>
<rect x="1818.5" y="598.5" width="10" height="4" rx="1" fill="url(#gl)" stroke="#3e4557"/>
<rect x="1852.5" y="594.5" width="10" height="8" rx="1" fill="url(#gl)" stroke="#3e4557"/>
<rect x="1855.5" y="597.5" width="4" height="2" fill="#a9b9cf" stroke="#3e4557"/>
<g transform="translate(1886,594)"><path d="M0.3 0.2h3.6l1.6 2 1.6-2h3.6l-3.5 4.3 3.5 4.3h-3.6l-1.6-2-1.6 2h-3.6l3.5-4.3z" fill="#3e4557" stroke="#3e4557" stroke-width=".8" stroke-linejoin="round"/><path d="M2.2 1.3L8.8 7.7M8.8 1.3L2.2 7.7" fill="none" stroke="#f4f4f4" stroke-width="1.25"/></g>
<text class="tt" x="29.6" y="26" font-size="12" fill="#8a8a8a" textLength="31" lengthAdjust="spacingAndGlyphs">Draft9</text>
<text class="tt" x="32.6" y="604" font-size="12" fill="#8a8a8a" textLength="31" lengthAdjust="spacingAndGlyphs">Draft9</text>
<g shape-rendering="crispEdges"><rect x="9" y="13" width="16" height="16" fill="#c0c0c0"/><rect x="10" y="17" width="1" height="1" fill="#00f"/><rect x="11" y="16" width="1" height="1" fill="#00f"/><rect x="12" y="15" width="1" height="1" fill="#00f"/><rect x="13" y="14" width="1" height="1" fill="#00f"/><rect x="14" y="14" width="1" height="1" fill="#00f"/><rect x="15" y="15" width="1" height="1" fill="#00f"/><rect x="16" y="16" width="1" height="1" fill="#00f"/><rect x="17" y="17" width="1" height="1" fill="#00f"/><rect x="18" y="16" width="1" height="1" fill="#00f"/><rect x="19" y="15" width="1" height="1" fill="#00f"/><rect x="20" y="14" width="1" height="1" fill="#00f"/><rect x="21" y="14" width="1" height="1" fill="#00f"/><rect x="22" y="15" width="1" height="1" fill="#00f"/><rect x="23" y="16" width="1" height="1" fill="#00f"/><rect x="24" y="17" width="1" height="1" fill="#00f"/><rect x="9" y="17" width="1" height="1" fill="#000"/><rect x="9" y="22" width="1" height="1" fill="#000"/><rect x="11" y="20" width="3" height="1" fill="#f00"/><rect x="16" y="21" width="1" height="1" fill="#f00"/><rect x="20" y="22" width="2" height="1" fill="#f00"/><rect x="14" y="25" width="1" height="1" fill="#000080"/><rect x="20" y="25" width="1" height="1" fill="#000080"/><rect x="9" y="27" width="16" height="1" fill="#000"/><rect x="9" y="28" width="3" height="1" fill="#000"/><rect x="13" y="28" width="4" height="1" fill="#000"/><rect x="18" y="28" width="4" height="1" fill="#000"/><rect x="24" y="28" width="1" height="1" fill="#000"/></g>
<g shape-rendering="crispEdges" stroke="#0000ff" fill="none"><rect x="17" y="594" width="2" height="9" fill="#0000ff" stroke="none"/><line x1="14" y1="598.5" x2="17" y2="598.5"/><line x1="19" y1="596" x2="23.7" y2="591.3"/><line x1="19" y1="600.5" x2="25" y2="606.5"/><polygon points="21,603 24,603.5 23,606" fill="#0000ff" stroke="none"/><rect x="21" y="602" width="2" height="2" fill="#00f" stroke="none"/><rect x="22" y="603" width="2" height="2" fill="#00f" stroke="none"/></g>
</svg>
</body></html>
